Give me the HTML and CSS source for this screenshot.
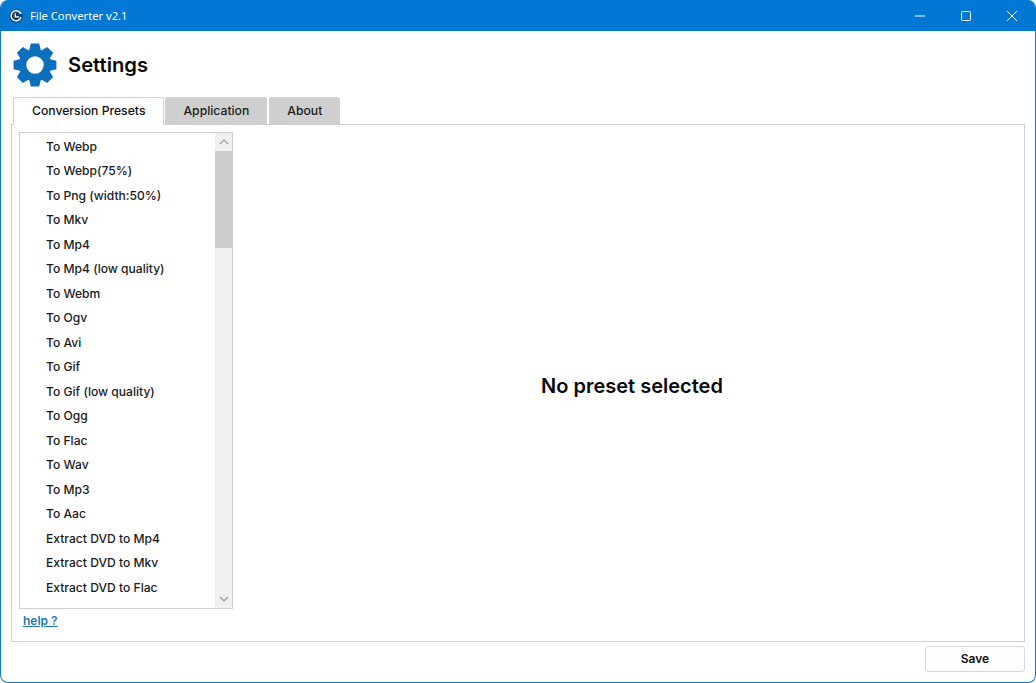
FILE: index.html
```html
<!DOCTYPE html>
<html lang="en">
<head>
<meta charset="utf-8">
<title>File Converter v2.1</title>
<link rel="stylesheet" href="styles.css">
</head>
<body>
<div class="window">
  <header class="titlebar">
    <svg class="app-icon" width="16" height="16" viewBox="0 0 16 16">
      <circle cx="7" cy="8" r="6.6" fill="#123f6b"/>
      <path d="M11.2 5A5 5 0 1 0 11.9 9" fill="none" stroke="#fff" stroke-width="1.4"/>
      <path d="M10.4 2.8v3h2.8z" fill="#fff"/>
      <path d="M6.3 5.2v3.6h3.6" fill="none" stroke="#fff" stroke-width="1.3"/>
    </svg>
    <span class="app-title">File Converter v2.1</span>
    <div class="controls">
      <button class="ctl"><svg width="12" height="12" viewBox="0 0 12 12"><path d="M1 6h10" stroke="#fff" fill="none"/></svg></button>
      <button class="ctl"><svg width="12" height="12" viewBox="0 0 12 12"><rect x="1.5" y="1.5" width="9" height="9" rx="1" stroke="#fff" fill="none"/></svg></button>
      <button class="ctl"><svg width="12" height="12" viewBox="0 0 12 12"><path d="M1 1l10 10M11 1L1 11" stroke="#fff" fill="none"/></svg></button>
    </div>
  </header>
  <main class="content">
    <div class="heading">
      <svg class="gear" width="44" height="44" viewBox="0 0 44 44">
        <g fill="#0b6fbc">
          <path d="M17.8 .6h8.4l2 8h-12.400z"/>
          <path d="M17.8 .6h8.4l2 8h-12.400z" transform="rotate(45 22 22)"/>
          <path d="M17.8 .6h8.4l2 8h-12.400z" transform="rotate(90 22 22)"/>
          <path d="M17.8 .6h8.4l2 8h-12.400z" transform="rotate(135 22 22)"/>
          <path d="M17.8 .6h8.4l2 8h-12.400z" transform="rotate(180 22 22)"/>
          <path d="M17.8 .6h8.4l2 8h-12.400z" transform="rotate(225 22 22)"/>
          <path d="M17.8 .6h8.4l2 8h-12.400z" transform="rotate(270 22 22)"/>
          <path d="M17.8 .6h8.4l2 8h-12.400z" transform="rotate(315 22 22)"/>
        </g>
        <circle cx="22" cy="22" r="12.4" fill="none" stroke="#0b6fbc" stroke-width="7.4"/>
      </svg>
      <h1 class="heading-text">Settings</h1>
    </div>
    <nav class="tabs">
      <div class="tab active">Conversion Presets</div>
      <div class="tab">Application</div>
      <div class="tab">About</div>
    </nav>
    <section class="panel">
      <div class="side">
        <div class="listbox">
          <ul class="items">
            <li>To Webp</li>
            <li>To Webp(75%)</li>
            <li>To Png (width:50%)</li>
            <li>To Mkv</li>
            <li>To Mp4</li>
            <li>To Mp4 (low quality)</li>
            <li>To Webm</li>
            <li>To Ogv</li>
            <li>To Avi</li>
            <li>To Gif</li>
            <li>To Gif (low quality)</li>
            <li>To Ogg</li>
            <li>To Flac</li>
            <li>To Wav</li>
            <li>To Mp3</li>
            <li>To Aac</li>
            <li>Extract DVD to Mp4</li>
            <li>Extract DVD to Mkv</li>
            <li>Extract DVD to Flac</li>
          </ul>
          <div class="scrollbar">
            <div class="arrow"><svg width="10" height="6" viewBox="0 0 10 6"><path d="M1 5l4-4 4 4" fill="none" stroke="#9a9a9a" stroke-width="1.2"/></svg></div>
            <div class="thumb"></div>
            <div class="track"></div>
            <div class="arrow"><svg width="10" height="6" viewBox="0 0 10 6"><path d="M1 1l4 4 4-4" fill="none" stroke="#9a9a9a" stroke-width="1.2"/></svg></div>
          </div>
        </div>
        <a class="help" href="#">help ?</a>
      </div>
      <div class="empty">No preset selected</div>
    </section>
    <div class="footer">
      <button class="save">Save</button>
    </div>
  </main>
</div>
</body>
</html>
```
FILE: styles.css
```css
* { box-sizing: border-box; }
html, body { margin: 0; padding: 0; height: 100%; background: #fff; overflow: hidden; }
body { font-family: Inter, "Liberation Sans", sans-serif; color: #111; }
.window {
  width: 1036px; height: 683px;
  display: flex; flex-direction: column;
  border: 1px solid #0f76c4; border-top: 0;
  border-radius: 8px; overflow: hidden; background: #fff;
}
.titlebar {
  flex: 0 0 31px; background: #0078d4; color: #fff;
  display: flex; align-items: center;
  padding-left: 9px; margin: 0 -1px;
}
.app-icon { margin-right: 5px; }
.app-title { font-family: "Noto Sans", sans-serif; font-size: 11.2px; line-height: 31px; }
.controls { margin-left: auto; margin-right: 1px; display: flex; }
.ctl {
  width: 46px; height: 31px; padding: 0; border: 0; background: none;
  display: flex; align-items: center; justify-content: center;
}
.content { flex: 1; display: flex; flex-direction: column; padding: 0 10px; min-height: 0; }
.heading { flex: 0 0 66px; display: flex; align-items: center; padding-left: 2px; gap: 11px; padding-top: 2px; }
.gear { display: block; margin-top: -1px; }
.heading-text { margin: 0; font-size: 20.2px; font-weight: 600; margin-top: -1px; color: #0a0a0a; }
.tabs { display: flex; height: 27px; padding-left: 2px; gap: 2px; position: relative; z-index: 1; }
.tab {
  height: 27px; padding: 0 18px;
  background: #cfcfcf; border-radius: 3px 3px 0 0;
  font-size: 12.2px; font-weight: 500; line-height: 28px; color: #1a1a1a;
}
.tab.active {
  height: 28px; background: #fff; color: #111; margin-right: -1px;
  border: 1px solid #d0d0d0; border-bottom: 0; line-height: 26px;
}
.panel {
  height: 518px; border: 1px solid #d0d0d0; background: #fff;
  display: flex; padding: 7px;
}
.side { width: 214px; flex: none; display: flex; flex-direction: column; }
.listbox { height: 477px; border: 1px solid #d0d0d0; display: flex; }
.items { flex: 1; margin: 0; padding: 1.5px 0 0; list-style: none; overflow: hidden; }
.items li {
  height: 24.5px; line-height: 24.5px; padding-left: 26px;
  font-size: 12.1px; font-weight: 500; color: #1a1a1a; white-space: nowrap;
}
.scrollbar { width: 17px; flex: none; background: #f0f0f0; display: flex; flex-direction: column; }
.arrow { height: 18px; flex: none; display: flex; align-items: center; justify-content: center; }
.thumb { height: 97px; flex: none; background: #cdcdcd; }
.track { flex: 1; }
.help {
  margin: 5px 0 0 4px; font-size: 12px; font-weight: 600; line-height: 14px;
  color: #1f78b4; text-decoration: underline;
}
.empty {
  flex: 1; display: flex; align-items: center; justify-content: center;
  font-size: 20px; font-weight: 600; color: #0a0a0a; padding: 6px 0 0 14px;
}
.footer { display: flex; justify-content: flex-end; padding-top: 4px; }
.save {
  width: 100px; height: 26px; background: #fdfdfd; padding: 0 0 2px;
  border: 1px solid #d8d8d8; border-radius: 3px;
  font-family: Inter, "Liberation Sans", sans-serif; font-size: 12px; font-weight: 600; color: #111;
}
```
